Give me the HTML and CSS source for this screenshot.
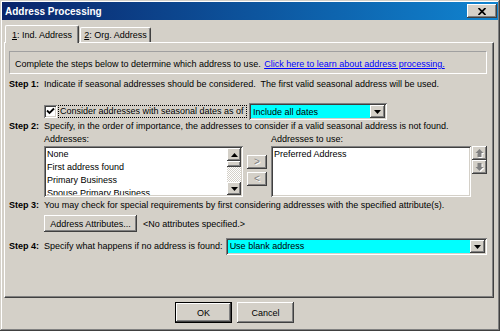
FILE: index.html
```html
<!DOCTYPE html>
<html lang="en">
<head>
    <meta charset="UTF-8">
    <title>Address Processing</title>
    <link rel="stylesheet" href="styles.css">
</head>
<body>
    <div class="window">
        <div class="titlebar">
            <span class="title">Address Processing</span>
            <button class="close raised">
                <svg width="8" height="7" viewBox="0 0 8 7"><path d="M0.5 0 L7.5 7 M7.5 0 L0.5 7" stroke="#000" stroke-width="1.7"/></svg>
            </button>
        </div>

        <div class="tabs">
            <div class="tab active"><span><u>1</u>: Ind. Address</span></div>
            <div class="tab"><span><u>2</u>: Org. Address</span></div>
        </div>

        <div class="panel">
            <div class="info">Complete the steps below to determine which address to use. <a href="#">Click here to learn about address processing.</a></div>

            <div class="step step-one">
                <b class="step-label">Step 1:</b>
                <span>Indicate if seasonal addresses should be considered.&nbsp; The first valid seasonal address will be used.</span>
            </div>

            <div class="check-row">
                <span class="checkbox">
                    <svg width="9" height="9" viewBox="0 0 9 9"><path d="M1 3.5 L3.5 6 L8 1.5" fill="none" stroke="#000" stroke-width="1.8"/></svg>
                </span>
                <span class="check-label">Consider addresses with seasonal dates as of</span>
                <div class="combo combo-dates">
                    <span class="combo-text">Include all dates</span>
                    <span class="drop raised"><svg width="7" height="4" viewBox="0 0 7 4"><path d="M0 0h7l-3.5 4z"/></svg></span>
                </div>
            </div>

            <div class="step">
                <b class="step-label">Step 2:</b>
                <span>Specify, in the order of importance, the addresses to consider if a valid seasonal address is not found.</span>
            </div>

            <div class="lists">
                <div class="list-col">
                    <div class="caption">Addresses:</div>
                    <div class="listbox listbox-left">
                        <ul class="items">
                            <li>None</li>
                            <li>First address found</li>
                            <li>Primary Business</li>
                            <li>Spouse Primary Business</li>
                        </ul>
                        <div class="scrollbar">
                            <span class="scroll-btn raised"><svg width="7" height="4" viewBox="0 0 7 4"><path d="M0 4h7l-3.5-4z"/></svg></span>
                            <span class="thumb raised"></span>
                            <span class="track"></span>
                            <span class="scroll-btn raised"><svg width="7" height="4" viewBox="0 0 7 4"><path d="M0 0h7l-3.5 4z"/></svg></span>
                        </div>
                    </div>
                </div>

                <div class="move-buttons">
                    <button class="move raised">&gt;</button>
                    <button class="move raised">&lt;</button>
                </div>

                <div class="list-col">
                    <div class="caption">Addresses to use:</div>
                    <div class="list-row">
                        <div class="listbox listbox-right">
                            <ul class="items">
                                <li>Preferred Address</li>
                            </ul>
                        </div>
                        <div class="order-buttons">
                            <button class="order raised">
                                <svg width="9" height="9" viewBox="0 0 9 9"><path d="M5.5 1 L9.5 5 H7.5 V9 H3.5 V5 H1.5z" fill="#fff"/><path d="M4.5 0 L8.5 4 H6.5 V8 H2.5 V4 H0.5z" fill="#808080"/></svg>
                            </button>
                            <button class="order raised">
                                <svg width="9" height="9" viewBox="0 0 9 9"><path d="M5.5 9 L9.5 5 H7.5 V1 H3.5 V5 H1.5z" fill="#fff"/><path d="M4.5 8 L8.5 4 H6.5 V0 H2.5 V4 H0.5z" fill="#808080"/></svg>
                            </button>
                        </div>
                    </div>
                </div>
            </div>

            <div class="step step-three">
                <b class="step-label">Step 3:</b>
                <span>You may check for special requirements by first considering addresses with the specified attribute(s).</span>
            </div>

            <div class="attr-row">
                <button class="attr-btn raised">Address Attributes...</button>
                <span class="attr-note">&lt;No attributes specified.&gt;</span>
            </div>

            <div class="step step-four">
                <b class="step-label">Step 4:</b>
                <span>Specify what happens if no address is found:</span>
                <div class="combo combo-blank">
                    <span class="combo-text">Use blank address</span>
                    <span class="drop raised"><svg width="7" height="4" viewBox="0 0 7 4"><path d="M0 0h7l-3.5 4z"/></svg></span>
                </div>
            </div>
        </div>

        <div class="dialog-buttons">
            <button class="dlg-btn default">OK</button>
            <button class="dlg-btn raised">Cancel</button>
        </div>
    </div>
</body>
</html>
```

FILE: styles.css
```css
* {
    box-sizing: border-box;
}
body {
    margin: 0;
    font-family: "Liberation Sans", Arial, sans-serif;
    font-size: 9px;
    color: #000;
    background: #d4d0c8;
}
button {
    font: inherit;
    color: inherit;
    margin: 0;
    padding: 0;
    border: none;
    background: #d4d0c8;
}
ul {
    list-style: none;
    margin: 0;
    padding: 0;
}
.raised {
    background: #d4d0c8;
    box-shadow: inset -1px -1px #404040, inset 1px 1px #fff, inset -2px -2px #808080, inset 2px 2px #d4d0c8;
}
.window {
    width: 500px;
    height: 331px;
    padding: 2px;
    background: #d4d0c8;
    box-shadow: inset -1px -1px #404040, inset 1px 1px #d4d0c8, inset -2px -2px #808080, inset 2px 2px #fff;
    display: flex;
    flex-direction: column;
}

/* title bar */
.titlebar {
    height: 18px;
    display: flex;
    align-items: center;
    justify-content: space-between;
    padding: 0 1px 0 3px;
    background: linear-gradient(90deg, #0a246a, #1084d0);
    color: #fff;
}
.title {
    font-weight: bold;
    font-size: 10px;
}
.close {
    width: 30px;
    height: 14px;
    display: flex;
    align-items: center;
    justify-content: center;
}

/* tabs */
.tabs {
    height: 22px;
    display: flex;
    align-items: flex-end;
    padding-left: 3px;
}
.tab {
    width: 71px;
    height: 15px;
    margin-left: 1px;
    border-top: 1px solid #fff;
    border-left: 1px solid #fff;
    border-right: 1px solid #404040;
    border-radius: 2px 2px 0 0;
    box-shadow: inset -1px 0 #808080;
    display: flex;
    align-items: center;
    justify-content: center;
    background: #d4d0c8;
}
.tab.active {
    width: 74px;
    height: 18px;
    margin-left: 0;
    margin-bottom: -1px;
    position: relative;
    z-index: 1;
}
.panel {
    height: 256px;
    margin: 0 4px 0 2px;
    padding: 8px 6px 0 4px;
    border: 1px solid;
    border-color: #fff #404040 #404040 #fff;
    box-shadow: inset -1px -1px #808080;
}

.info {
    border: 1px solid;
    border-color: #a0a0a0 #fff #fff #a0a0a0;
    padding: 6px 5px 2px;
    line-height: 13px;
    white-space: nowrap;
}
.info a {
    color: #0000ff;
    margin-left: 1px;
}

.step {
    display: flex;
    align-items: center;
    line-height: 13px;
    white-space: nowrap;
}
.step-label {
    width: 35px;
    flex: none;
}
.step-one {
    margin-top: 4px;
}

/* seasonal checkbox */
.check-row {
    display: flex;
    align-items: center;
    height: 17px;
    margin-top: 12px;
    padding-left: 35px;
}
.checkbox {
    width: 13px;
    height: 13px;
    background: #fff;
    box-shadow: inset 1px 1px #808080, inset -1px -1px #fff, inset 2px 2px #404040, inset -2px -2px #d4d0c8;
    display: flex;
    align-items: center;
    justify-content: center;
}
.check-label {
    margin-left: 1px;
    padding: 0 1px;
    border: 1px dotted #000;
    line-height: 11px;
    width: 189px;
}
.combo {
    height: 17px;
    padding: 2px;
    display: flex;
    align-items: center;
    background: #00ffff;
    box-shadow: inset 1px 1px #808080, inset -1px -1px #fff, inset 2px 2px #404040, inset -2px -2px #d4d0c8;
}
.combo-text {
    flex: 1;
    padding-left: 2px;
}
.drop {
    width: 15px;
    height: 13px;
    display: flex;
    align-items: center;
    justify-content: center;
}
.combo-dates {
    width: 138px;
    margin-left: 2px;
}

/* address lists */
.lists {
    display: flex;
    padding-left: 35px;
}
.caption {
    line-height: 13px;
}
.listbox {
    height: 51px;
    padding: 2px;
    display: flex;
    background: #fff;
    box-shadow: inset 1px 1px #808080, inset -1px -1px #fff, inset 2px 2px #404040, inset -2px -2px #d4d0c8;
}
.listbox-left {
    width: 199px;
}
.listbox-right {
    width: 200px;
}
.items {
    flex: 1;
    overflow: hidden;
    line-height: 13px;
}
.items li {
    padding-left: 1px;
    white-space: nowrap;
}
.scrollbar {
    width: 14px;
    display: flex;
    flex-direction: column;
}
.scroll-btn {
    height: 13px;
    display: flex;
    align-items: center;
    justify-content: center;
    flex: none;
}
.thumb {
    height: 6px;
    flex: none;
}
.track {
    flex: 1;
    background: repeating-conic-gradient(#fff 0 25%, #d4d0c8 0 50%) 0 0 / 2px 2px;
}
.move-buttons {
    display: flex;
    flex-direction: column;
    gap: 3px;
    margin: 22px 4px 0 4px;
}
.move {
    width: 20px;
    height: 14px;
    color: #808080;
    text-shadow: 1px 1px #fff;
    font-size: 10px;
    line-height: 14px;
}
.list-row {
    display: flex;
}
.order-buttons {
    margin-left: 1px;
    display: flex;
    flex-direction: column;
}
.order {
    width: 15px;
    height: 14px;
    display: flex;
    align-items: center;
    justify-content: center;
}

.step-three {
    margin-top: 2px;
}
.attr-row {
    display: flex;
    align-items: center;
    margin-top: 3px;
    padding-left: 35px;
}
.attr-btn {
    width: 93px;
    height: 17px;
}
.attr-note {
    margin-left: 6px;
}
.step-four {
    margin-top: 6px;
}
.combo-blank {
    flex: 1;
    margin-left: 3px;
}

/* OK / Cancel */
.dialog-buttons {
    display: flex;
    gap: 5px;
    margin-top: 4px;
    padding-left: 173px;
}
.dlg-btn {
    width: 57px;
    height: 21px;
}
.default {
    border: 1px solid #000;
    box-shadow: inset -1px -1px #404040, inset 1px 1px #fff, inset -2px -2px #808080;
}
```
